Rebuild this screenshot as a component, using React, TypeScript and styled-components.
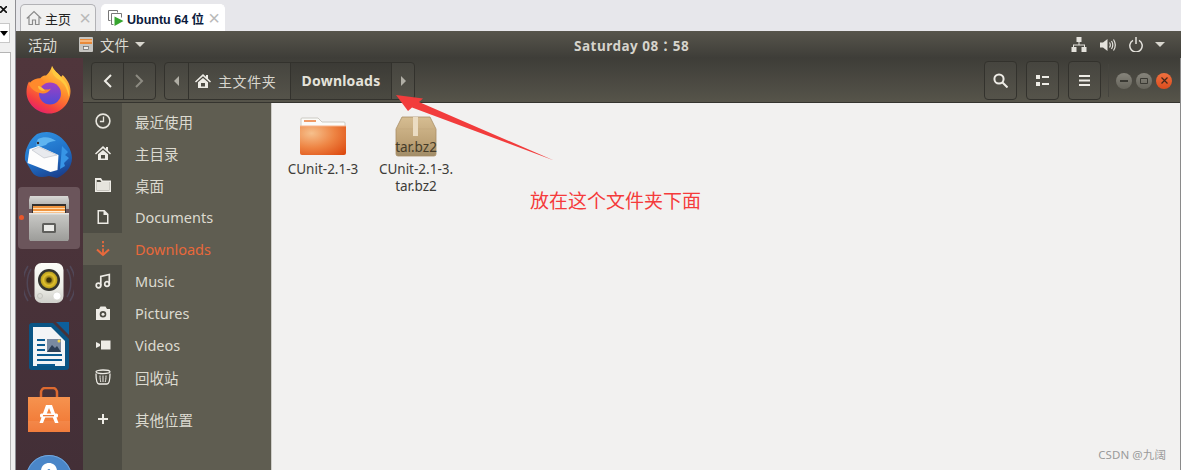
import React from "react";
import styled, { createGlobalStyle } from "styled-components";

const SANS = `"Noto Sans", "Noto Sans CJK SC", sans-serif`;

const SIDEBAR_ITEMS = [
  { label: "最近使用", icon: <ClockIcon /> },
  { label: "主目录", icon: <HomeIcon /> },
  { label: "桌面", icon: <FolderIcon /> },
  { label: "Documents", icon: <DocIcon /> },
  { label: "Downloads", icon: <DownloadIcon />, active: true },
  { label: "Music", icon: <MusicIcon /> },
  { label: "Pictures", icon: <CameraIcon /> },
  { label: "Videos", icon: <VideoIcon /> },
  { label: "回收站", icon: <TrashIcon /> },
];

function ClockIcon() {
  return (
    <svg width="16" height="16" viewBox="0 0 16 16" fill="none" stroke="#e8e6de" strokeWidth="1.6">
      <circle cx="8" cy="8" r="6.9" />
      <path d="M8.5 3.500v5H4.900" strokeWidth="1.300" />
    </svg>
  );
}

function HomeIcon({ size = 16, color = "#eeece6" }: { size?: number; color?: string }) {
  return (
    <svg width={size} height={size} viewBox="0 0 16 16" fill={color}>
      <path d="M8 1 0 8.400l1 1.100L8 3.200l7 6.300 1-1.100-3-2.800V2h-2v1.800z" />
      <path d="M3 9.300 8 4.900l5 4.400V15H3zM6 10v3.600h4V10z" fillRule="evenodd" />
    </svg>
  );
}

function FolderIcon() {
  return (
    <svg width="16" height="16" viewBox="0 0 16 16" fill="#eeece6">
      <path d="M0 1h6l1.500 2.500H16V15H0zM1.700 3v10.500h12.600V5H6.500L5.200 3z" fillRule="evenodd" />
      <path d="M1.700 5h12.600v8.500H1.700z" opacity=".95" />
    </svg>
  );
}

function DocIcon() {
  return (
    <svg width="16" height="16" viewBox="0 0 16 16" fill="#eeece6">
      <path d="M2.500 1h7L13.500 5v10h-11zM4 2.500v11h8V6H8.500V2.500z" fillRule="evenodd" />
    </svg>
  );
}

function DownloadIcon() {
  return (
    <svg width="16" height="16" viewBox="0 0 16 16" fill="none" stroke="#e9693c" strokeWidth="2">
      <path d="M8 0v2.200M8 4v2M8 7.500v6.500" strokeWidth="1.800" />
      <path d="M2 8.500 8 14l6-5.500" />
    </svg>
  );
}

function MusicIcon() {
  return (
    <svg width="16" height="16" viewBox="0 0 16 16" fill="none" stroke="#eeece6" strokeWidth="1.700">
      <circle cx="3.500" cy="12.500" r="2.300" />
      <circle cx="12" cy="11" r="2.300" />
      <path d="M5.800 12.500V3.500l8.500-2V11" />
    </svg>
  );
}

function CameraIcon() {
  return (
    <svg width="16" height="16" viewBox="0 0 16 16" fill="#eeece6">
      <path d="M5.500 1.500h5L12 4h3v11H1V4h3zM8 6a3.300 3.300 0 1 0 0 6.600A3.300 3.300 0 0 0 8 6z" fillRule="evenodd" />
      <circle cx="8" cy="9.300" r="1.500" />
    </svg>
  );
}

function VideoIcon() {
  return (
    <svg width="16" height="16" viewBox="0 0 16 16" fill="#eeece6">
      <path d="M6 3.500h9.500v9H6zM1 5l4 2v2l-4 2z" />
    </svg>
  );
}

function TrashIcon() {
  return (
    <svg width="16" height="16" viewBox="0 0 16 16" fill="none" stroke="#eeece6" strokeWidth="1.300">
      <ellipse cx="8" cy="2.800" rx="7" ry="1.800" />
      <path d="M1 4.500c0 6 .5 10.500 3 10.500h8c2.500 0 3-4.500 3-10.500" />
      <path d="M5 6.500c0 3 .3 5 .8 6.500M8 6.500V13M11 6.500c0 3-.3 5-.8 6.500" strokeWidth="1" />
    </svg>
  );
}

function PlusIcon() {
  return (
    <svg width="12" height="12" viewBox="0 0 12 12" stroke="#eeece6" strokeWidth="2">
      <path d="M6 1v10M1 6h10" />
    </svg>
  );
}

function FirefoxIcon() {
  return (
    <svg width="48" height="48" viewBox="0 0 48 48">
      <defs>
        <linearGradient id="ffBody" x1="0.800" y1="0" x2="0.300" y2="1">
          <stop offset="0" stopColor="#ffd84a" />
          <stop offset="0.450" stopColor="#ff8d2b" />
          <stop offset="0.800" stopColor="#f5413f" />
          <stop offset="1" stopColor="#e31f6e" />
        </linearGradient>
        <linearGradient id="ffGlobe" x1="0.500" y1="0" x2="0.500" y2="1">
          <stop offset="0" stopColor="#a23fc2" />
          <stop offset="1" stopColor="#4f4bd6" />
        </linearGradient>
      </defs>
      <path
        d="M27 0c2 5 6 7 9 11 1-1 1.500-2 1.500-2 3 2.500 8 8.500 8 16C45.500 37 36 47.500 24.500 47.500 12 47.500 1.500 37.500 1.500 26c0-4 .8-8 2.500-10.500 1 1.200 2 2 3 2 2-3 5-5.500 8-5 2-2.500 4-3 6-3C25 6 26 3 27 0z"
        fill="url(#ffBody)"
      />
      <path d="M27 0c2 5 6 7 9 11 6 6 9 12 8 20-2-8-4-14-11-18-3-2-7-5-6-13z" fill="#ffc93f" />
      <circle cx="25" cy="27.500" r="11" fill="url(#ffGlobe)" />
      <path
        d="M4 18c2-3 6-6 11-5.500 3 1 5 3.500 4.500 5.500-1 1-3.500 1-4.500 2 0 2 3 3.500 6 3.500 2 0 4 0 5-1-2 4-7 6-11 4.500C10 26 6 23 4 18z"
        fill="#ff8a2c"
      />
      <path d="M13 20c2 0 5 2 7 4.500-3 1-7-.5-7-4.500z" fill="#ffbe3f" />
    </svg>
  );
}

function ThunderbirdIcon() {
  return (
    <svg width="50" height="50" viewBox="0 0 50 50">
      <defs>
        <linearGradient id="tbBody" x1="0.300" y1="0" x2="0.700" y2="1">
          <stop offset="0" stopColor="#2f8fe0" />
          <stop offset="0.550" stopColor="#1f6fc6" />
          <stop offset="1" stopColor="#1a3d8a" />
        </linearGradient>
      </defs>
      <path
        d="M13 5c7-3 15-3 22 2 7 5 13 14 13 22 0 10-8 17-15 20l-8-2c-8 2-14 1-17-4L1 31C0 21 6 10 13 5z"
        fill="url(#tbBody)"
      />
      <path d="M14 10c6-3 13-2 18 2-4 0-8 1-10 4-2 1-6 1-9 3-1-3-1-6 1-9z" fill="#5fb4f0" />
      <circle cx="14" cy="14" r="1.200" fill="#3a2a2a" />
      <path d="M5.500 20 14.500 17l20 9-1 15-7 2L3.500 34z" fill="#fdfdfd" />
      <path d="M8 21 20 29l13-3-18-8z" fill="#e8eaee" stroke="#b8bcc4" strokeWidth=".6" />
      <path d="M38 17l6 6-3 3 4 3-5 5 1 3-5 3z" fill="#3795e6" />
    </svg>
  );
}

function FilesIcon() {
  return (
    <svg width="42" height="46" viewBox="0 0 42 46">
      <defs>
        <linearGradient id="cabFront" x1="0" y1="0" x2="0" y2="1">
          <stop offset="0" stopColor="#c9c9c6" />
          <stop offset="1" stopColor="#9c9c99" />
        </linearGradient>
        <linearGradient id="cabTop" x1="0" y1="0" x2="0" y2="1">
          <stop offset="0" stopColor="#d9d9d6" />
          <stop offset="1" stopColor="#a5a5a2" />
        </linearGradient>
      </defs>
      <path d="M2 1h38l1 4v9H1V5z" fill="url(#cabTop)" />
      <rect x="4" y="9" width="34" height="17" fill="#33302d" />
      <rect x="5" y="11" width="32" height="8" fill="#f0953f" />
      <rect x="5" y="13" width="32" height="1" fill="#ffd9a8" />
      <rect x="5" y="16" width="32" height="1.500" fill="#fff0dc" />
      <path d="M1 19h40v25l-1 2H2l-1-2z" fill="url(#cabFront)" />
      <rect x="1" y="18" width="40" height="1.500" fill="#e6e6e3" />
      <rect x="14" y="28" width="14" height="10" rx="1.500" fill="#5f5f5c" />
      <rect x="16" y="30" width="10" height="6" fill="#ebebe8" />
    </svg>
  );
}

function SpeakerIcon() {
  return (
    <svg width="50" height="50" viewBox="0 0 50 50">
      <defs>
        <radialGradient id="spkCone" cx="0.500" cy="0.500" r="0.500">
          <stop offset="0" stopColor="#4f420e" />
          <stop offset="0.300" stopColor="#8a7418" />
          <stop offset="0.650" stopColor="#e2c12c" />
          <stop offset="1" stopColor="#b29a1e" />
        </radialGradient>
        <linearGradient id="spkBody" x1="0" y1="0" x2="0" y2="1">
          <stop offset="0" stopColor="#fcfcf8" />
          <stop offset="0.600" stopColor="#eeeee8" />
          <stop offset="1" stopColor="#cfcfca" />
        </linearGradient>
      </defs>
      <path
        d="M7 12C2 20 2 32 7 40M4 9c-7 11-7 24 0 35M43 12c5 8 5 20 0 28M46 9c7 11 7 24 0 35"
        fill="none"
        stroke="#5c6685"
        strokeWidth="1.500"
        opacity=".4"
      />
      <rect x="10.500" y="6" width="29" height="40" rx="7" fill="url(#spkBody)" />
      <circle cx="25" cy="23" r="11" fill="#33332f" />
      <circle cx="25" cy="23" r="8.500" fill="url(#spkCone)" />
      <circle cx="25" cy="23" r="2.600" fill="#3e3308" />
      <circle cx="33" cy="39" r="4" fill="#fff" stroke="#d0d0ca" strokeWidth=".6" />
      <circle cx="16" cy="39" r="2.500" fill="none" stroke="#c4c4be" />
    </svg>
  );
}

function WriterIcon() {
  return (
    <svg width="42" height="50" viewBox="0 0 42 50">
      <path d="M28 1h13v13z" fill="#0d5f9b" />
      <path d="M4 2h21l16 16v28a3 3 0 0 1-3 3H4a3 3 0 0 1-3-3V5a3 3 0 0 1 3-3z" fill="#0a5484" />
      <path d="M5 6h18l14 14v25H5z" fill="#f3f4f6" />
      <path d="M9 18h8v2H9zM9 23h8v2H9zM9 28h8v2H9zM9 33h25v2H9zM9 38h25v2H9zM9 43h18v2H9z" fill="#0b5a90" />
      <rect x="19" y="18" width="14" height="13" fill="#7a8aa0" />
      <path d="M19 31l5-7 3 3 2-2 4 6z" fill="#2e3f55" />
      <circle cx="31" cy="20" r="1.500" fill="#f5d547" />
    </svg>
  );
}

function SoftwareIcon() {
  return (
    <svg width="44" height="46" viewBox="0 0 44 46">
      <defs>
        <linearGradient id="bag" x1="0" y1="0" x2="0" y2="1">
          <stop offset="0" stopColor="#f6934f" />
          <stop offset="0.700" stopColor="#f27d3a" />
          <stop offset="1" stopColor="#f0722c" />
        </linearGradient>
      </defs>
      <path d="M14 12V6c0-3 2-5 4-5h8c2 0 4 2 4 5v6" fill="none" stroke="#dd6a30" strokeWidth="2.500" />
      <path d="M1 10h42v35H1z" fill="url(#bag)" />
      <path d="M1 34h42v11H1z" fill="#fff" opacity=".08" />
      <path d="M19 18h6l6.500 18h-3.500L22 21l-6 15h-3.500z" fill="#fff" />
      <rect x="13" y="26.500" width="18" height="4" rx="1.500" fill="#fff" />
      <rect x="16" y="28" width="11" height="1.300" fill="#ef7a39" />
    </svg>
  );
}

function HelpIcon() {
  return (
    <svg width="48" height="48" viewBox="0 0 48 48">
      <circle cx="24" cy="28" r="23" fill="#4a86c8" />
      <circle cx="24" cy="28" r="22.500" fill="none" stroke="#74a8de" />
      <path d="M16 21c0-5 4-8 8-8s8 3 8 8c0 4-4 5-5 8h-6c0-4 3-6 4-7 1-2 0-3-1-3s-2 1-2 2z" fill="#fff" />
    </svg>
  );
}

function FolderLarge() {
  return (
    <svg width="48" height="40" viewBox="0 0 48 40">
      <defs>
        <radialGradient id="fold" cx="0.250" cy="0.250" r="1">
          <stop offset="0" stopColor="#f6c08c" />
          <stop offset="0.500" stopColor="#ee8443" />
          <stop offset="1" stopColor="#dd4a10" />
        </radialGradient>
      </defs>
      <path d="M2 2a1 1 0 0 1 1-1h16l4 4h22a1 1 0 0 1 1 1v6H2z" fill="#fbfbf9" stroke="#c2c0b8" strokeWidth=".8" />
      <rect x="5" y="3" width="12" height="2" fill="#ef9a66" />
      <path d="M1 9h46v27a2 2 0 0 1-2 2H3a2 2 0 0 1-2-2z" fill="url(#fold)" />
      <path d="M1 9h46" stroke="#f7b48c" strokeWidth="1" />
    </svg>
  );
}

function ArchiveIcon() {
  return (
    <svg width="44" height="42" viewBox="0 0 44 42">
      <defs>
        <linearGradient id="box" x1="0" y1="0" x2="0" y2="1">
          <stop offset="0" stopColor="#d6bd92" />
          <stop offset="0.650" stopColor="#bda276" />
          <stop offset="1" stopColor="#a08c68" />
        </linearGradient>
      </defs>
      <path d="M8 1h28l6 12v25a2 2 0 0 1-2 2H4a2 2 0 0 1-2-2V13z" fill="url(#box)" stroke="#a88e66" strokeWidth=".8" />
      <path d="M2 13h40" stroke="#c4a97e" strokeWidth="1" />
      <rect x="19" y="1" width="5" height="19" fill="#ebdcc2" />
    </svg>
  );
}

function App(): JSX.Element {
  return (
    <Page>
      <GlobalStyle />
      <LeftStrip>
        <StripClose>
          <svg width="7" height="7" viewBox="0 0 7 7" stroke="#111" strokeWidth="1.600">
            <path d="M0 0l7 7M7 0 0 7" />
          </svg>
        </StripClose>
        <StripSelect>
          <StripCaret />
        </StripSelect>
        <StripPanel />
      </LeftStrip>

      <MainColumn>
        <TabBar>
          <Tab>
            <TabGlyph>
              <svg width="16" height="16" viewBox="0 0 16 16" fill="none" stroke="#8a8a8a" strokeWidth="1.200">
                <path d="M.8 8.500 8 1.500l7.200 7M3 7v7.500h3.500V10h3v4.500H13V7" />
              </svg>
            </TabGlyph>
            <TabLabel>主页</TabLabel>
            <TabClose>×</TabClose>
          </Tab>
          <Tab $active>
            <TabGlyph>
              <svg width="16" height="18" viewBox="0 0 16 18" fill="none">
                <path d="M.5 1.500h9v2M.5 1.500v10h2" stroke="#777" />
                <path d="M3.500 4.500h10v4M3.500 4.500v11h2" stroke="#777" />
                <path d="M6.500 7.500 15.500 12l-9 5z" fill="#37a52f" />
              </svg>
            </TabGlyph>
            <TabLabel $active>Ubuntu 64 位</TabLabel>
            <TabClose>×</TabClose>
          </Tab>
        </TabBar>

        <Desktop>
          <TopBar>
            <Activities>活动</Activities>
            <AppMenu>
              <svg width="14" height="15" viewBox="0 0 14 15">
                <rect x="0" y="0" width="14" height="15" rx="1" fill="#c5c4c0" />
                <rect x="1" y="2" width="12" height="5" fill="#e98a3a" />
                <rect x="1" y="3.500" width="12" height="1" fill="#ffe3c2" />
                <rect x="4.500" y="9.500" width="5" height="3" fill="#f0f0ee" stroke="#666" strokeWidth=".7" />
              </svg>
              文件
              <SmallCaret />
            </AppMenu>
            <Clock>Saturday 08：58</Clock>
            <Indicators>
              <svg width="16" height="15" viewBox="0 0 16 15" fill="#e4e2dc">
                <path d="M5.500 0h5v5h-2v2.500H14V10h1.500v5h-5v-5H13V8.500H3V10h2.500v5h-5v-5H2V7.500h5.500V5h-2z" />
              </svg>
              <svg width="16" height="14" viewBox="0 0 16 14" fill="none" stroke="#e4e2dc" strokeWidth="1.200">
                <path d="M0 4.500h3L7.500 1v12L3 9.500H0z" fill="#e4e2dc" stroke="none" />
                <path d="M9.500 4.500c1 1.500 1 3.500 0 5M11.500 3c1.600 2.500 1.600 5.500 0 8M13.500 1.500c2.300 3.500 2.300 7.500 0 11" />
              </svg>
              <svg width="14" height="15" viewBox="0 0 14 15" fill="none" stroke="#e4e2dc" strokeWidth="1.500">
                <path d="M4 3.300a6.200 6.200 0 1 0 6 0M7 0v7" />
              </svg>
              <SmallCaret />
            </Indicators>
          </TopBar>

          <Workspace>
            <Dock>
              <DockSlot>
                <FirefoxIcon />
              </DockSlot>
              <DockSlot>
                <ThunderbirdIcon />
              </DockSlot>
              <DockSlot $running>
                <FilesIcon />
              </DockSlot>
              <DockSlot>
                <SpeakerIcon />
              </DockSlot>
              <DockSlot>
                <WriterIcon />
              </DockSlot>
              <DockSlot>
                <SoftwareIcon />
              </DockSlot>
              <DockSlot>
                <HelpIcon />
              </DockSlot>
            </Dock>

            <Window>
              <HeaderBar>
                <ButtonGroup>
                  <HeaderButton>
                    <svg width="9" height="14" viewBox="0 0 9 14" fill="none" stroke="#eeece6" strokeWidth="2">
                      <path d="M8 1 2 7l6 6" />
                    </svg>
                  </HeaderButton>
                  <HeaderButton>
                    <svg width="9" height="14" viewBox="0 0 9 14" fill="none" stroke="#8d8b82" strokeWidth="2">
                      <path d="m1 1 6 6-6 6" />
                    </svg>
                  </HeaderButton>
                </ButtonGroup>
                <PathBar>
                  <PathArrow>
                    <ArrowGlyph />
                  </PathArrow>
                  <PathSegment>
                    <HomeIcon size={16} />
                    主文件夹
                  </PathSegment>
                  <PathSegment $current>Downloads</PathSegment>
                  <PathArrow $right>
                    <ArrowGlyph />
                  </PathArrow>
                </PathBar>
                <HeaderActions>
                  <ToolButton>
                    <svg width="15" height="15" viewBox="0 0 15 15" fill="none" stroke="#eeece6" strokeWidth="2">
                      <circle cx="6" cy="6" r="4.600" />
                      <path d="m9.500 9.500 5 5" />
                    </svg>
                  </ToolButton>
                  <ToolButton>
                    <svg width="13" height="11" viewBox="0 0 13 11" fill="#eeece6">
                      <path d="M0 0h4v4H0zM6 1h7v2H6zM0 7h4v4H0zM6 8h7v2H6z" />
                    </svg>
                  </ToolButton>
                  <ToolButton>
                    <svg width="11" height="11" viewBox="0 0 11 11" fill="#eeece6">
                      <path d="M0 0h11v2H0zM0 4.500h11v2H0zM0 9h11v2H0z" />
                    </svg>
                  </ToolButton>
                  <HeaderDivider />
                  <WindowControls>
                    <WindowButton>
                      <svg width="8" height="2" viewBox="0 0 8 2" fill="#3a3933">
                        <path d="M0 0h8v2H0z" />
                      </svg>
                    </WindowButton>
                    <WindowButton>
                      <svg width="8" height="8" viewBox="0 0 8 8" fill="none" stroke="#3a3933">
                        <path d="M.5 1.500h7v5h-7z" />
                      </svg>
                    </WindowButton>
                    <WindowButton $close>
                      <svg width="7" height="7" viewBox="0 0 7 7" stroke="#43271a" strokeWidth="1.200">
                        <path d="m.5.500 6 6M6.500.500l-6 6" />
                      </svg>
                    </WindowButton>
                  </WindowControls>
                </HeaderActions>
              </HeaderBar>

              <WindowBody>
                <Sidebar>
                  {SIDEBAR_ITEMS.map((item) => (
                    <SidebarRow key={item.label}>
                      <SidebarIcon $active={item.active}>{item.icon}</SidebarIcon>
                      <SidebarLabel $active={item.active}>{item.label}</SidebarLabel>
                    </SidebarRow>
                  ))}
                  <SidebarRow $spaced>
                    <SidebarIcon>
                      <PlusIcon />
                    </SidebarIcon>
                    <SidebarLabel>其他位置</SidebarLabel>
                  </SidebarRow>
                </Sidebar>

                <FileArea>
                  <FileItem>
                    <FileThumb>
                      <FolderLarge />
                    </FileThumb>
                    <FileName>CUnit-2.1-3</FileName>
                  </FileItem>
                  <FileItem>
                    <FileThumb>
                      <ArchiveIcon />
                      <ArchiveTag>tar.bz2</ArchiveTag>
                    </FileThumb>
                    <FileName>
                      CUnit-2.1-3.
                      <br />
                      tar.bz2
                    </FileName>
                  </FileItem>
                </FileArea>
              </WindowBody>
            </Window>
          </Workspace>
        </Desktop>
      </MainColumn>

      <CalloutArrow width="170" height="75" viewBox="0 0 170 75">
        <path d="M0 0 27 3.500 23 7 158 65.500 16 12.500 12 16z" fill="#f23c3c" />
      </CalloutArrow>
      <CalloutText>放在这个文件夹下面</CalloutText>
      <Watermark>CSDN @九阔</Watermark>
    </Page>
  );
}

const GlobalStyle = createGlobalStyle`
  html, body {
    margin: 0;
    padding: 0;
    overflow: hidden;
    background: #f2f1f0;
  }
`;

const Page = styled.div`
  position: relative;
  display: flex;
  width: 1181px;
  height: 470px;
  overflow: hidden;
  font-family: ${SANS};
`;

const LeftStrip = styled.div`
  width: 15px;
  flex: none;
  display: flex;
  flex-direction: column;
  background: #f0f0f0;
  border-right: 1px solid #8f8f94;
`;

const StripClose = styled.div`
  height: 23px;
  display: flex;
  align-items: center;
  padding-bottom: 4px;
  box-sizing: border-box;
`;

const StripSelect = styled.div`
  width: 10px;
  height: 20px;
  background: #fff;
  border: 1px solid #c8c8c8;
  border-left: 0;
  display: flex;
  align-items: center;
  box-sizing: border-box;
  margin-bottom: 9px;
`;

const StripCaret = styled.div`
  width: 0;
  height: 0;
  border-left: 4px solid transparent;
  border-right: 4px solid transparent;
  border-top: 5px solid #000;
`;

const StripPanel = styled.div`
  flex: 1;
  width: 11px;
  box-sizing: border-box;
  background: #fff;
  border: 1px solid #b4b4b4;
  border-left: 0;
  border-bottom: 0;
`;

const MainColumn = styled.div`
  flex: 1;
  min-width: 0;
  display: flex;
  flex-direction: column;
`;

const TabBar = styled.div`
  height: 31px;
  flex: none;
  display: flex;
  align-items: flex-end;
  gap: 5px;
  padding-left: 4px;
  background: #e7e7eb;
`;

const Tab = styled.div<{ $active?: boolean }>`
  height: 27px;
  box-sizing: border-box;
  width: ${(p) => (p.$active ? "124px" : "76px")};
  display: flex;
  align-items: center;
  gap: 3px;
  padding-left: ${(p) => (p.$active ? "6px" : "5px")};
  background: ${(p) => (p.$active ? "#fff" : "#f0f0f0")};
  border: 1px solid ${(p) => (p.$active ? "#fff" : "#b2b2b6")};
  border-bottom: 0;
  border-radius: 5px 5px 0 0;
`;

const TabGlyph = styled.span`
  display: flex;
  flex: none;
`;

const TabLabel = styled.span<{ $active?: boolean }>`
  font-family: ${(p) => (p.$active ? `"Liberation Sans", "Noto Sans CJK SC", sans-serif` : `"Noto Sans CJK SC", sans-serif`)};
  font-size: ${(p) => (p.$active ? "12.5px" : "13px")};
  font-weight: ${(p) => (p.$active ? 700 : 400)};
  color: ${(p) => (p.$active ? "#0b1a3c" : "#222")};
  white-space: nowrap;
`;

const TabClose = styled.span`
  margin-left: auto;
  margin-right: 4px;
  color: #b9b9b9;
  font-family: "Liberation Sans", sans-serif;
  font-size: 20px;
  line-height: 1;
`;

const Desktop = styled.div`
  flex: 1;
  min-height: 0;
  display: flex;
  flex-direction: column;
`;

const TopBar = styled.div`
  height: 27px;
  flex: none;
  display: flex;
  align-items: center;
  padding-left: 12px;
  padding-right: 16px;
  color: #dcdad2;
  font-size: 14.5px;
  background: linear-gradient(#57554c, #3e3d38);
`;

const Activities = styled.span`
  width: 51px;
  flex: none;
`;

const AppMenu = styled.span`
  display: flex;
  align-items: center;
  gap: 7px;
  width: 495px;
  flex: none;
`;

const SmallCaret = styled.span`
  width: 0;
  height: 0;
  margin-left: -1px;
  border-left: 5px solid transparent;
  border-right: 5px solid transparent;
  border-top: 5px solid #d8d6ce;
`;

const Clock = styled.span`
  font-family: "Noto Sans", "Noto Sans CJK TC", sans-serif;
  font-weight: 700;
  font-size: 13.5px;
  letter-spacing: 0.5px;
  color: #d6d4cc;
`;

const Indicators = styled.div`
  margin-left: auto;
  display: flex;
  align-items: center;
  gap: 13px;
`;

const Workspace = styled.div`
  flex: 1;
  min-height: 0;
  display: flex;
`;

const Dock = styled.div`
  width: 67px;
  flex: none;
  box-sizing: border-box;
  padding-right: 1px;
  display: flex;
  flex-direction: column;
  align-items: center;
  background: linear-gradient(#50363c, #432f37);
`;

const DockSlot = styled.div<{ $running?: boolean }>`
  position: relative;
  flex: none;
  width: 62px;
  height: ${(p) => (p.$running ? "62px" : "64px")};
  margin: ${(p) => (p.$running ? "1px 0" : "0")};
  display: flex;
  align-items: center;
  justify-content: center;
  border-radius: 4px;
  background: ${(p) => (p.$running ? "#6b555b" : "transparent")};

  ${(p) =>
    p.$running
      ? `&::before {
    content: "";
    position: absolute;
    left: 1px;
    top: 28px;
    width: 5px;
    height: 5px;
    border-radius: 50%;
    background: #e9572b;
  }`
      : ""}
`;

const Window = styled.div`
  flex: 1;
  min-width: 0;
  display: flex;
  flex-direction: column;
  border-right: 1px solid #8a8a8a;
`;

const HeaderBar = styled.div`
  height: 45px;
  flex: none;
  box-sizing: border-box;
  display: flex;
  align-items: center;
  padding: 1px 8px 0 8px;
  background: linear-gradient(#3e3d38, #56544a);
  border-bottom: 1px solid #35342f;
`;

const ButtonGroup = styled.div`
  display: flex;
  height: 38px;
  box-sizing: border-box;
  border: 1px solid #33322d;
  border-radius: 4px;
  background: linear-gradient(#46453f, #55534a);
`;

const HeaderButton = styled.div`
  width: 31px;
  display: flex;
  align-items: center;
  justify-content: center;

  & + & {
    border-left: 1px solid #33322d;
  }
`;

const PathBar = styled.div`
  display: flex;
  height: 38px;
  box-sizing: border-box;
  margin-left: 8px;
  border: 1px solid #33322d;
  border-radius: 4px;
  background: linear-gradient(#46453f, #55534a);
`;

const PathArrow = styled.div<{ $right?: boolean }>`
  width: ${(p) => (p.$right ? "22px" : "23px")};
  display: flex;
  align-items: center;
  justify-content: center;
  & > * {
    transform: ${(p) => (p.$right ? "none" : "scaleX(-1)")};
  }
`;

const ArrowGlyph = styled.span`
  width: 0;
  height: 0;
  border-left: 5px solid #b0aea5;
  border-top: 5px solid transparent;
  border-bottom: 5px solid transparent;
`;

const PathSegment = styled.div<{ $current?: boolean }>`
  width: 102px;
  box-sizing: border-box;
  display: flex;
  align-items: center;
  justify-content: ${(p) => (p.$current ? "center" : "flex-start")};
  padding-left: ${(p) => (p.$current ? "0" : "6px")};
  gap: 7px;
  font-size: 14px;
  font-weight: ${(p) => (p.$current ? 700 : 400)};
  letter-spacing: ${(p) => (p.$current ? "0.2px" : "0.6px")};
  color: ${(p) => (p.$current ? "#e4e2da" : "#d8d6ce")};
  border-left: 1px solid #33322d;
  ${(p) =>
    p.$current
      ? `background: linear-gradient(#3c3b36, #4a4941);
  border-right: 1px solid #33322d;`
      : ""}
`;

const HeaderActions = styled.div`
  margin-left: auto;
  display: flex;
  align-items: center;
`;

const ToolButton = styled.div`
  width: 33px;
  height: 39px;
  box-sizing: border-box;
  display: flex;
  align-items: center;
  justify-content: center;
  border: 1px solid #33322d;
  border-radius: 4px;
  background: linear-gradient(#46453f, #55534a);

  & + & {
    margin-left: 9px;
  }
`;

const HeaderDivider = styled.div`
  width: 1px;
  height: 33px;
  margin: 0 7px;
  background: #45443e;
`;

const WindowControls = styled.div`
  display: flex;
  gap: 4px;
`;

const WindowButton = styled.div<{ $close?: boolean }>`
  width: 16px;
  height: 16px;
  border-radius: 50%;
  display: flex;
  align-items: center;
  justify-content: center;
  background: ${(p) =>
    p.$close ? "linear-gradient(#f0703f, #dc4d1e)" : "linear-gradient(#86847b, #66645b)"};
`;

const WindowBody = styled.div`
  flex: 1;
  min-height: 0;
  display: flex;
`;

const Sidebar = styled.div`
  width: 189px;
  flex: none;
  padding-top: 2px;
  box-sizing: border-box;
  display: flex;
  flex-direction: column;
  background: linear-gradient(to right, #4e4d44 39px, #5f5d51 39px);
  border-right: 1px solid #cfcec9;
`;

const SidebarRow = styled.div<{ $spaced?: boolean }>`
  display: flex;
  height: 32px;
  margin-top: ${(p) => (p.$spaced ? "10px" : "0")};
  align-items: stretch;
`;

const SidebarIcon = styled.div<{ $active?: boolean }>`
  width: 39px;
  flex: none;
  display: flex;
  align-items: center;
  justify-content: center;
  background: ${(p) => (p.$active ? "#5f5d51" : "transparent")};
`;

const SidebarLabel = styled.div<{ $active?: boolean }>`
  padding-left: 13px;
  display: flex;
  align-items: center;
  font-size: 14.5px;
  color: ${(p) => (p.$active ? "#e8683a" : "#dcdad0")};
`;

const FileArea = styled.div`
  flex: 1;
  min-width: 0;
  display: flex;
  align-items: flex-start;
  gap: 3px;
  padding: 13px 0 0 6px;
  background: #f2f1f0;
`;

const FileItem = styled.div`
  width: 90px;
  display: flex;
  flex-direction: column;
  align-items: center;
`;

const FileThumb = styled.div`
  position: relative;
  height: 42px;
  display: flex;
  align-items: center;
  justify-content: center;
`;

const ArchiveTag = styled.span`
  position: absolute;
  left: 0;
  right: 0;
  bottom: 4px;
  text-align: center;
  font-size: 13.5px;
  line-height: 14px;
  color: #463c28;
`;

const FileName = styled.div`
  margin-top: 3px;
  font-size: 13.5px;
  line-height: 17px;
  text-align: center;
  color: #3d3c38;
`;

const CalloutArrow = styled.svg`
  position: absolute;
  left: 396px;
  top: 95px;
`;

const CalloutText = styled.div`
  position: absolute;
  left: 530px;
  top: 186px;
  font-family: "Noto Sans CJK SC", sans-serif;
  font-size: 19px;
  line-height: 28px;
  color: #f53b3b;
`;

const Watermark = styled.div`
  position: absolute;
  right: 15px;
  bottom: 8px;
  font-size: 11.5px;
  letter-spacing: 0.1px;
  color: #9a9a9a;
`;

export default App;
